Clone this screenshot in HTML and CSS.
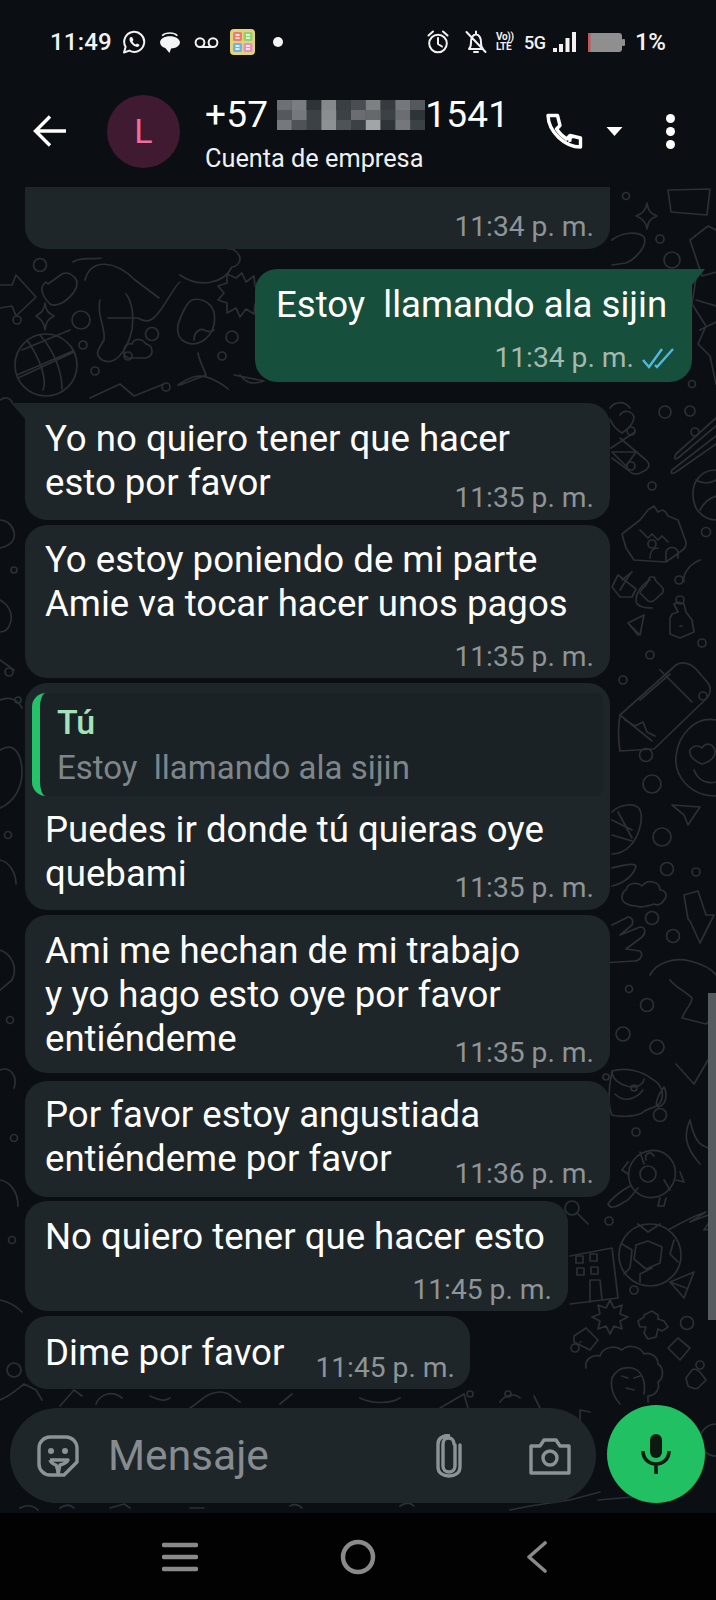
FILE: index.html
```html
<!DOCTYPE html>
<html lang="es">
<head>
<meta charset="utf-8">
<title>WhatsApp</title>
<link rel="stylesheet" href="styles.css">
</head>
<body>
<div class="app">
  <div class="status">
    <span class="clock">11:49</span>
    <svg class="si si-wa" viewBox="0 0 24 24"><path class="w2" d="M2 22.5l1.6-5.6A10 10 0 1 1 7.4 20.6z"/><path class="wf" d="M9 7c-.6 0-1.500.9-1.500 2.300 0 3 3.700 7.200 7.500 7.600 1.500 0 2.500-1.100 2.500-2.100l-2.500-1.400-1.100 1.100c-1.600-.6-2.800-1.800-3.400-3.300l1-1.100L10.200 7.300z"/></svg>
    <svg class="si si-msg" viewBox="0 0 21 20"><path class="wf" d="M10.500 4C5 4 1 6.500 1 10c0 2.500 2.200 4.500 5 5.200L10 20l1.500-4.200c4.500-.3 8.500-2.500 8.500-5.800 0-3.500-4.500-6-9.500-6z"/><path class="w15" d="M3 3.500C5 1.500 8 1 10.500 1s5 .5 7 2.500"/></svg>
    <svg class="si si-vm" viewBox="0 0 25 11"><path class="w2" d="M6 10h13M6 1.200a4.400 4.400 0 1 0 0 8.800 4.400 4.400 0 0 0 0-8.800zM19 1.200a4.400 4.400 0 1 0 0 8.800 4.400 4.400 0 0 0 0-8.800z"/></svg>
    <svg class="si si-app" viewBox="0 0 25 26"><rect width="25" height="26" rx="4" fill="#e3d479"/><rect x="3" y="3" width="9" height="9" rx="1.500" fill="#ea7d6e"/><rect x="13.500" y="3" width="9" height="9" rx="1.500" fill="#93d06f"/><rect x="3" y="14" width="9" height="9" rx="1.500" fill="#6db2e8"/><rect x="13.500" y="14" width="9" height="9" rx="1.500" fill="#e590c8"/><path d="M5.500 6h4M5.500 9h4M16 6h4M16 9h4M5.500 17h4M5.500 20h4M16 17h4M16 20h4" stroke="#fff" stroke-width="1.300"/></svg>
    <span class="sdot"></span>
    <span class="grow"></span>
    <svg class="si si-alarm" viewBox="0 0 22 24"><circle class="w2" cx="11" cy="13.500" r="8.800"/><path class="w2" d="M11 8v6l4 2.500M1.500 5.500L6 1.500M20.500 5.500L16 1.500"/></svg>
    <svg class="si si-bell" viewBox="0 0 22 24"><path class="w2" d="M4 19c1.500-1.500 2-3 2-6.500C6 8 7.500 5 11 4.300 14.500 5 16 8 16 12.500c0 3 .5 5 2 6.500zM9 22h4M11 1.500v2.500M1.500 2l19 20"/></svg>
    <div class="volte"><span>Vo))</span><span>LTE</span></div>
    <span class="fiveg">5G</span>
    <svg class="si si-sig" viewBox="0 0 23 21"><rect x="0" y="16" width="4" height="4"/><rect x="6" y="12" width="4" height="8"/><rect x="12.500" y="6" width="4" height="14"/><rect x="19" y="0" width="4" height="20"/></svg>
    <svg class="si si-bat" viewBox="0 0 37 19"><rect width="34" height="19" rx="3" fill="#8f8f8f"/><rect width="2.500" height="19" fill="#c0565a"/><rect x="34" y="6" width="3" height="7" rx="1" fill="#8f8f8f"/></svg>
    <span class="pct">1%</span>
  </div>

  <header class="bar">
    <svg class="back" viewBox="0 0 34 32"><path d="M33 16H3M17 1.500L2.500 16 17 30.500"/></svg>
    <div class="avatar">L</div>
    <div class="who">
      <div class="name">+57
        <svg class="blur" viewBox="0 0 10 3" preserveAspectRatio="none"><rect width="10" height="3" fill="#3c4145"/><rect x="0" width="1" height="1" fill="#6d7175"/><rect x="1" width="1" height="1" fill="#7a7e82"/><rect x="2" width="1" height="1" fill="#2e3337"/><rect x="3" width="1" height="1" fill="#85898c"/><rect x="4" width="1" height="1" fill="#3a3f43"/><rect x="5" width="1" height="1" fill="#494e52"/><rect x="6" width="1" height="1" fill="#7d8184"/><rect x="7" width="1" height="1" fill="#363b3f"/><rect x="8" width="1" height="1" fill="#74787c"/><rect x="9" width="1" height="1" fill="#55595d"/><rect x="0" y="1" width="1" height="1" fill="#55595d"/><rect x="1" y="1" width="1" height="1" fill="#75797d"/><rect x="3" y="1" width="1" height="1" fill="#8a8e91"/><rect x="5" y="1" width="1" height="1" fill="#6a6e72"/><rect x="6" y="1" width="1" height="1" fill="#65696d"/><rect x="8" y="1" width="1" height="1" fill="#6a6e72"/><rect x="9" y="1" width="1" height="1" fill="#2f3438"/><rect x="0" y="2" width="1" height="1" fill="#75797d"/><rect x="1" y="2" width="1" height="1" fill="#4e5357"/><rect x="3" y="2" width="1" height="1" fill="#8d9194"/><rect x="4" y="2" width="1" height="1" fill="#4e5357"/><rect x="6" y="2" width="1" height="1" fill="#a1a5a8"/><rect x="7" y="2" width="1" height="1" fill="#2f3438"/><rect x="8" y="2" width="1" height="1" fill="#74787c"/></svg>1541
      </div>
      <div class="sub">Cuenta de empresa</div>
    </div>
    <svg class="phone" viewBox="0 0 38 36"><path d="M3 2.500h9.500l2.500 10-3.500 3.500c3 4.500 5.500 7 10 10l3.500-3.500 10.500 2.500V34C20 34 3.500 19 3 2.500zM5 2.500 M25 29a5 5 0 0 1 3-6"/></svg>
    <svg class="caret" viewBox="0 0 17 10"><path d="M0.500 1h16L8.500 10z"/></svg>
    <div class="dots"><i></i><i></i><i></i></div>
  </header>

  <main class="chat">
    <svg class="doodles" viewBox="0 187 716 1326">
      <!-- top right -->
      <circle cx="626" cy="196" r="3.500"/><path d="M647 203c1 8 4 11 10 13-6 2-9 5-10 13-1-8-5-11-11-13 6-2 10-5 11-13z"/>
      <circle cx="660" cy="239" r="4"/><circle cx="672" cy="260" r="8"/>
      <path d="M668 190l3 22 36 3 3-26zM690 240l18-14 20 10-4 34-22 6z"/>
      <path d="M612 240c10-8 26-9 32-3 4 8-8 22-18 26l-14 2"/>
      <path d="M696 278l-4 26 14 22-8 18 12 12 6 28M696 300l20 6M700 330l16-8"/>
      <circle cx="692" cy="384" r="3.500"/>
      <!-- top left band -->
      <circle cx="40" cy="265" r="6.500"/><circle cx="17" cy="320" r="4"/><circle cx="81" cy="320" r="9"/><circle cx="83" cy="345" r="4"/><circle cx="95" cy="371" r="4"/><circle cx="128" cy="356" r="4"/><circle cx="152" cy="334" r="6.500"/><circle cx="232" cy="337" r="6"/><circle cx="222" cy="356" r="4"/><circle cx="166" cy="387" r="4"/>
      <path d="M45 303c1 8 3 10 9 13-6 3-8 6-9 14-1-8-4-11-9-14 5-3 8-5 9-13z"/>
      <path d="M0 285h12l4-10 20 22-20 19-4-10-12 2"/>
      <circle cx="46" cy="365" r="31"/><path d="M18 378l56-26M22 350l48-20M27 340c14 20 20 40 16 50M40 335c14 16 22 36 22 54M17 375l56-24"/>
      <path d="M46 282c-6 4-6 12 4 22 8 4 18-4 24-12 4-6 4-12 0-15-6-6-10-4-12-3l-14 10z"/>
      <path d="M73 262c8-6 20-2 28-4M85 280c6-22 30-20 50 0l24 18M100 300c-4 14 6 28 4 40-6 10-10 14-2 20 12 6 24-6 30-30 2-16 0-28-6-36M108 318h30c12 8 18-2 24-10 8-12 16-26 18-26"/>
      <path d="M180 275c20 14 44 8 52-8 4 0 8-4 8-8s-6-12-12-10"/>
      <path d="M184 310c-6 12-10 22-2 30 8 6 16 4 22 0 8-6 12-16 10-28-4-12-16-14-22-12-4 2-6 6-8 10zM194 340c0-8 6-12 10-10 4 2 8 2 10 0"/>
      <path d="M226 293l4 9 8-6 1 10 10 2-7 7 7 7-10 2-1 10-8-5-6 8-4-9-9 5v-10l-9-3 6-7-6-7 9-3v-9l9 4z" transform="translate(16 -20)"/>
      <path d="M178 385c14-10 24-12 38-4 6 3 10 6 12 8M198 353c2 10 6 16 8 22l-26 10M240 375c6 8 12 10 24 6l-30-6M90 398l30-14 14 12 30-12"/>
      <path d="M146 344c-4-6-12-6-14 0-8-2-12 10-4 14h18c8-2 8-12 0-14z"/>
      <path d="M0 400c6-4 10-2 12 2"/>
      <!-- right column upper -->
      <path d="M630 408c-6-8-16-6-20 0M620 415c4-6 12-4 14 2 0 6-6 12-12 16-4-2-10-8-12-14M620 438l26 22c4 4 4 6 0 10l-8 4c-4 0-6 0-10-4l-16-12"/>
      <circle cx="665" cy="412" r="6"/><circle cx="690" cy="411" r="5"/><circle cx="695" cy="432" r="4"/><circle cx="631" cy="431" r="4"/><circle cx="652" cy="486" r="4"/><circle cx="706" cy="532" r="4.500"/><circle cx="631" cy="466" r="4"/>
      <path d="M636 452h-24l14 14 10-14zM611 448l24-16"/>
      <path d="M716 418l-40 36c-2 4-2 6 2 4l38-32M716 436l-44 34c-2 4 0 4 4 2l40-28"/>
      <path d="M716 470c-18 0-26 16-22 32 2 12 14 18 22 18M696 480c6 4 14 4 20 0M700 510c4-8 10-12 16-14"/>
      <path d="M640 520l-18 14 4 14 8 12 32 2 14-10c6-4 6-6 6-10l-8-22-10-4c-4-8-6-6-10-4l-4-6-6 4zM640 530l8 8 4-4 6 6 4-4 6 6M650 558c0-8 4-10 8-10M666 562v-10c2-6 10-6 12 0v6"/>
      <circle cx="652" cy="544" r="4"/>
      <path d="M618 575l18 14-4 8h-12l-8-10zM632 572l-10 8"/>
      <path d="M620 590l10-16"/>
      <path d="M650 580c-10 6-14 14-14 20 0 6 8 8 16 8M700 560c-10 4-18 14-16 22"/>
      <!-- right column middle -->
      <path d="M646 585c-4 4-6 6-6 8l8 8c4 2 6 0 12-6 4-2 4-6 2-8l-6-6-2-4h-4l-2 4zM670 618l2-4 6-2-4-8 4-2 6 2 2 8 6 8 2 12-14 6-10-4zM680 626h2"/>
      <path d="M628 623l16-8-4 20zM628 623l10 12"/>
      <circle cx="679" cy="580" r="4"/><circle cx="702" cy="643" r="4"/><circle cx="650" cy="655" r="4"/><circle cx="623" cy="680" r="4"/><circle cx="703" cy="696" r="4"/><circle cx="680" cy="600" r="4"/><circle cx="646" cy="755" r="6.500"/><circle cx="652" cy="784" r="9"/><circle cx="662" cy="837" r="9"/><circle cx="667" cy="869" r="6.500"/><circle cx="696" cy="872" r="4"/><circle cx="652" cy="918" r="6.500"/><circle cx="673" cy="936" r="6.500"/>
      <path d="M620 715l56-50c6-4 14-2 20 4l12 14c4 6 2 12-2 16l-52 50-34 2c-2-12-2-24 0-36zM620 715l32 26M660 670l32 32M625 720l10 6 8-4 4 10 8 4M640 700l30-26"/>
      <path d="M716 720c-22-4-38 16-40 36-2 20 14 40 40 40M690 750c4-6 10-4 12-2 4-6 10-4 12 0 4 8-4 14-12 16-6-2-14-8-12-14zM694 770c4 10 12 14 22 12"/>
      <path d="M672 805l28 2-12 18-4-10z"/>
      <path d="M612 812c8-8 24-10 28-2 4 10-2 28-10 36-6 6-12 8-18 8M612 820l20 10M612 835l20 6M618 812l14 26"/>
      <path d="M612 868c8-2 22-6 24-2-2 10-14 18-24 20"/>
      <path d="M626 888c2-8 12-8 16-4 6-8 18-4 18 4 6 0 8 6 4 10-2 4-6 6-10 4-6 2-14 4-18 2-8 0-14-4-14-8s2-8 4-8z" transform="translate(0 2)"/>
      <path d="M684 895l14-4 8 24 8 0-14 28-10-22-2-2z"/>
      <path d="M612 925l16-8c4 0 6 4 4 8l-12 10 20-8c6 0 6 6 2 10l-16 12 14 2c4 4 0 10-6 10l-32 2"/>
      <path d="M650 975c6-12 24-18 40-14 8 2 20 6 26 14"/>
      <circle cx="629" cy="989" r="3.500"/><circle cx="647" cy="1005" r="6.500"/><circle cx="623" cy="1034" r="7"/><circle cx="657" cy="1047" r="7"/><circle cx="660" cy="1115" r="6.500"/><circle cx="636" cy="1132" r="4"/><circle cx="609" cy="1221" r="4"/><circle cx="634" cy="1290" r="4"/><circle cx="687" cy="1323" r="6.500"/><circle cx="700" cy="1365" r="4"/><circle cx="575" cy="1348" r="4"/>
      <path d="M670 980c6 8 14 10 22 18 0 6-6 10-10 20l24 6 10-8M676 1064l18 20 14-24"/>
      <path d="M612 1071c14-4 30 0 40 8 8 4 14 14 8 24-4 6-12 4-18 10-8 4-24 4-30 2-4-8-4-26 0-44zM615 1094c10 10 22 4 28-4M664 1087c-6 8-10 18-6 20 8-2 10-12 6-20zM612 1071c0 16 30 22 32 8"/>
      <circle cx="606" cy="1077" r="3"/><circle cx="634" cy="1088" r="3"/>
      <path d="M690 1120c-6 14-6 26 10 44M716 1150c-10-4-20 0-26-30"/>
      <ellipse cx="652" cy="1174" rx="23" ry="24" transform="rotate(40 652 1174)"/><circle cx="648" cy="1174" r="8"/><path d="M646 1160c-2-6 4-10 8-4M628 1162l-6 8 6 4M630 1186c-8 4-18 12-22 18 2 6 10 2 16-2 6-2 10-10 14-14M660 1198l-2 8h6l2-8M676 1180l8 2-4-10M640 1152l4 12M670 1190l-6-10"/>
      <circle cx="650" cy="1255" r="31"/><path d="M648 1241l14 6-2 16-14 6-12-10 2-14zM638 1224l10 8 12-8M622 1244l10 6-2 18-6 6M674 1240l-4 14 8 8M640 1282v-8l12-6"/>
      <path d="M668 1230c12-6 24-14 38-18l-16 10 26-10-12 18 12-2"/>
      <path d="M670 1282l24-10-10 26zM670 1282l16 6"/>
      <path d="M570 1256l42-8 6 50-48 6M590 1302v-22h10l2 20"/>
      <rect x="576" y="1256" width="7" height="7"/><rect x="590" y="1254" width="7" height="7"/><rect x="577" y="1268" width="7" height="7"/><rect x="591" y="1267" width="7" height="7"/>
      <circle cx="572" cy="1208" r="7"/><path d="M578 1214l10 10"/>
      <path d="M610 1300l4 8 8-3-2 9 8 3-8 4 2 8-8-3-4 8-4-8-8 3 2-8-8-4 8-3-2-9 8 3z"/>
      <path d="M644 1315l8-4 6 4v4l6 2 4 6-6 4-4-2-2 8-8 2-4-6 2-6-6 0-2-6 6-4z"/>
      <path d="M668 1348l10-10 12 10-10 12zM686 1378l6-8c2-2 6 0 8 2l6 8-8 8c-4 2-6 0-10-2z"/>
      <path d="M574 1336l12-8 12 12-8 10-16-8zM580 1342h1"/>
      <path d="M586 1368c-2-8 6-14 14-12 2-8 14-12 22-6 6-6 18-4 22 4 6-2 14 2 14 10 6 4 6 14 0 18 2 6-2 14-10 14v6M620 1404c-6-6-10-16-8-26 4-8 10-12 20-10 10 2 14 14 12 26M622 1376l6 2M634 1378l6-2M626 1388l8 2"/>
      <path d="M580 1420l0-10 10 2"/>
      <!-- left column -->
      <path d="M0 520c6 0 12 4 14 12s-4 14-14 16M0 600c8 4 14 14 10 24-2 6-6 8-10 8M0 660l14 10M0 700c10-4 18 0 22 8M0 750c16-10 22 8 22 22 0 16-8 30-22 36M0 860c10 2 16 14 16 24M0 950c12 4 18 18 12 30l-12 10M0 1070c10-4 18 6 14 18M0 1180c12 2 18 14 18 26M0 1300c10 2 18 8 22 12"/>
      <circle cx="9" cy="672" r="4"/><circle cx="14" cy="570" r="3"/><circle cx="18" cy="700" r="3"/><circle cx="8" cy="835" r="3.500"/><circle cx="10" cy="1020" r="3.500"/><circle cx="14" cy="1138" r="3.500"/><circle cx="12" cy="1240" r="3.500"/>
      <!-- bottom band -->
      <circle cx="14" cy="1370" r="7"/><path d="M0 1400c10-4 14-8 24-16l12 6 6 10M60 1406l14-16 8 6M96 1404c4-10 16-14 26-6M150 1396c10 4 14 6 20 2M190 1408c12-8 18-16 30-16 10 0 12 6 20 10M280 1404l12-10M360 1398c12 6 30 6 40 0M440 1408l24-14 4 14M500 1402c4-6 14-10 20-4M540 1408l-6-12"/>
      <circle cx="508" cy="1394" r="3"/><circle cx="470" cy="1394" r="3"/>
      <path d="M20 1508c8-4 14-2 18 2M60 1508c6-4 10-4 14 0M110 1508l14-4 6 4M190 1508h14M290 1506c4-2 8-2 12 2M400 1506c6-4 10-4 14 0M510 1510l20-4 40-6 30-8M598 1500l46-4"/>
      <circle cx="716" cy="1440" r="16"/>
    </svg>

    <div class="msgs">
      <div class="bub first"><span class="t t-first">11:34 p. m.</span></div>

      <div class="bub out">
        <p class="tx">Estoy &nbsp;llamando ala sijin</p>
        <div class="t-row"><span class="t t-out">11:34 p. m.</span>
          <svg class="ticks" viewBox="0 0 32 21"><path d="M1 12l6 7L20 1M13 17l2 2L31 1"/></svg>
        </div>
      </div>

      <div class="bub in tail m2">
        <p class="tx">Yo no quiero tener que hacer<br>esto por favor</p>
        <span class="t t-in over">11:35 p. m.</span>
      </div>

      <div class="bub in m3">
        <p class="tx">Yo estoy poniendo de mi parte<br>Amie va tocar hacer unos pagos</p>
        <span class="t t-in below">11:35 p. m.</span>
      </div>

      <div class="bub in m4">
        <div class="reply">
          <div class="rname">Tú</div>
          <div class="rtext">Estoy &nbsp;llamando ala sijin</div>
        </div>
        <p class="tx">Puedes ir donde tú quieras oye<br>quebami</p>
        <span class="t t-in over">11:35 p. m.</span>
      </div>

      <div class="bub in m5">
        <p class="tx">Ami me hechan de mi trabajo<br>y yo hago esto oye por favor<br>entiéndeme</p>
        <span class="t t-in over">11:35 p. m.</span>
      </div>

      <div class="bub in m6">
        <p class="tx">Por favor estoy angustiada<br>entiéndeme por favor</p>
        <span class="t t-in over">11:36 p. m.</span>
      </div>

      <div class="bub in m7">
        <p class="tx">No quiero tener que hacer esto</p>
        <span class="t t-in below7">11:45 p. m.</span>
      </div>

      <div class="bub in m8">
        <p class="tx nowrap">Dime por favor</p>
        <span class="t t-in side">11:45 p. m.</span>
      </div>
    </div>

    <div class="scroll"></div>

    <div class="composer">
      <div class="input">
        <svg class="emoji" viewBox="0 0 42 42"><path d="M13 2h16c6 0 11 5 11 11v14L27 40H13C7 40 2 35 2 29V13C2 7 7 2 13 2z"/><path d="M13 25h18c-1 3-4 4-8 5-1 3-1 6-2 9M21 39c0-4-1-7-2-9-3-1-5-2-6-5"/><circle class="fill" cx="14" cy="16" r="3"/><circle class="fill" cx="28" cy="16" r="3"/></svg>
        <span class="ph">Mensaje</span>
        <span class="grow"></span>
        <svg class="clip" viewBox="0 0 28 44"><path d="M20 11v21c0 4-3 6-6 6s-6-2-6-6V10c0-3 2-6 5.500-6S19 7 19 10M25 11v22c0 6-5 9-11 9S3 39 3 33V10C3 5 7 1.500 13.500 1.500"/></svg>
        <svg class="cam" viewBox="0 0 42 38"><path d="M2 9h9l4-6h12l4 6h9v27H2z"/><circle cx="21" cy="21" r="7"/></svg>
      </div>
      <button class="mic" type="button" aria-label="Micrófono">
        <svg viewBox="0 0 30 40"><rect x="9" y="0" width="12" height="24" rx="6" fill="#0c1a12"/><path d="M2 17c0 8 6 13 13 13s13-5 13-13M15 30v10" fill="none" stroke="#0c1a12" stroke-width="3.600"/></svg>
      </button>
    </div>
  </main>

  <nav class="nav">
    <svg class="n-menu" viewBox="0 0 36 30"><path d="M2 3h32M2 15h32M2 27h32"/></svg>
    <svg class="n-home" viewBox="0 0 36 36"><circle cx="18" cy="18" r="15"/></svg>
    <svg class="n-back" viewBox="0 0 22 32"><path d="M19 2L3 16l16 14"/></svg>
  </nav>
</div>
</body>
</html>
```

FILE: styles.css
```css
* { box-sizing: border-box; }
html, body { margin: 0; padding: 0; background: #0b0f13; }
body { font-family: Roboto, "Liberation Sans", sans-serif; overflow: hidden; }
.app { width: 716px; height: 1600px; display: flex; flex-direction: column; overflow: hidden; color: #fff; }
.grow { flex: 1; }

/* status bar */
.status { height: 82px; flex: none; display: flex; align-items: center; padding: 2px 51px 0 50px; background: #0b0f13; }
.clock { font-size: 24px; font-weight: 500; width: 72px; color: #f2f2f2; letter-spacing: .2px; }
.si { flex: none; display: block; }
.w2 { fill: none; stroke: #f2f2f2; stroke-width: 2; stroke-linejoin: round; stroke-linecap: round; }
.w15 { fill: none; stroke: #f2f2f2; stroke-width: 1.5; }
.wf { fill: #f5f5f5; }
.si-wa { width: 24px; height: 24px; margin-right: 13px; }
.si-msg { width: 22px; height: 21px; margin-right: 13px; }
.si-vm { width: 25px; height: 11px; margin-right: 11px; }
.si-app { width: 25px; height: 26px; }
.sdot { width: 10px; height: 10px; border-radius: 50%; background: #f5f5f5; margin-left: 18px; }
.si-alarm { width: 22px; height: 24px; margin-right: 16px; }
.si-bell { width: 22px; height: 24px; margin-right: 9px; }
.volte { width: 21px; display: flex; flex-direction: column; font-size: 10px; font-weight: 700; line-height: 10px; margin-right: 7px; color: #f2f2f2; letter-spacing: -.3px; }
.fiveg { width: 22px; font-size: 18px; font-weight: 500; margin-right: 7px; color: #f2f2f2; letter-spacing: -.6px; white-space: nowrap; }
.si-sig { width: 23px; height: 21px; margin-right: 12px; fill: #f2f2f2; }
.si-bat { width: 37px; height: 19px; margin-right: 10px; }
.pct { font-size: 24px; font-weight: 500; width: 30px; color: #f2f2f2; white-space: nowrap; letter-spacing: -.3px; }

/* header */
.bar { height: 105px; flex: none; display: flex; align-items: center; background: #0b0f13; padding: 0 0 9px 33px; }
.back { width: 34px; height: 32px; margin-right: 40px; margin-top: 1px; fill: none; stroke: #fff; stroke-width: 3.4; }
.avatar { width: 73px; height: 73px; border-radius: 50%; background: #3f1a30; color: #ef6e9d; font-size: 34px; display: flex; align-items: center; justify-content: center; margin: 2px 25px 0 0; }
.who { width: 340px; padding-top: 9px; }
.name { font-size: 37px; line-height: 40px; display: flex; align-items: center; gap: 9px; letter-spacing: .2px; }
.blur { width: 148px; height: 30px; margin-right: -9px; }
.sub { font-size: 25.300px; line-height: 30px; margin-top: 9px; color: #f0f0f0; }
.phone { width: 38px; height: 36px; margin-top: 2px; fill: none; stroke: #fff; stroke-width: 3.4; stroke-linejoin: round; }
.caret { width: 17px; height: 10px; margin: 2px 0 0 23px; fill: #fff; }
.dots { display: flex; flex-direction: column; gap: 4px; margin: 3px 0 0 43px; }
.dots i { display: block; width: 9px; height: 9px; border-radius: 50%; background: #fff; }

/* chat */
.chat { position: relative; flex: 1; display: flex; flex-direction: column; background: #0b0f13; overflow: hidden; }
.doodles { position: absolute; left: 0; top: 0; width: 716px; height: 1326px; fill: none; stroke: #2b3034; stroke-width: 1.700; stroke-linecap: round; stroke-linejoin: round; }
.msgs { position: relative; flex: 1; display: flex; flex-direction: column; align-items: flex-start; }
.bub { position: relative; background: #1f2629; border-radius: 22px; }
.tx { margin: 0; font-size: 36.600px; line-height: 44px; color: #fff; }
.nowrap { white-space: nowrap; }
.t { font-size: 28.200px; line-height: 34px; color: #8e9497; display: block; white-space: nowrap; }
.t-in { text-align: right; }
.first { margin-left: 25px; width: 585px; height: 62px; border-radius: 0 0 22px 22px; padding: 23px 16px 0 0; }
.t-first { text-align: right; }

.out { align-self: flex-start; margin: 20px 0 0 255px; width: 437px; height: 113px; background: #164f3b; border-radius: 22px 0 22px 22px; padding: 14px 18px 0 21px; }
.out::after { content: ""; position: absolute; top: 0; left: 100%; width: 13px; height: 16px; background: #164f3b; clip-path: polygon(0 0, 100% 0, 0 100%); }
.t-row { display: flex; align-items: center; justify-content: flex-end; gap: 8px; margin-top: 14px; }
.t-out { color: #a5b9ae; }
.ticks { width: 32px; height: 21px; fill: none; stroke: #52b8de; stroke-width: 2.400; }

.in { margin-left: 25px; width: 585px; padding: 14px 16px 0 20px; }
.tail { border-top-left-radius: 0; }
.tail::before { content: ""; position: absolute; top: 0; right: 100%; width: 14px; height: 16px; background: #1f2629; clip-path: polygon(0 0, 100% 0, 100% 100%); }
.over { margin-top: -24px; }
.below { margin-top: 14px; }
.below7 { margin-top: 14px; }
.m2 { margin-top: 21px; height: 117px; }
.m3 { margin-top: 5px; height: 153px; padding-top: 13px; }
.m4 { margin-top: 5px; height: 227px; padding: 10px 16px 0 7px; }
.m4 .tx { margin: 12px 0 0 13px; }
.m4 .over { margin-top: -25px; }
.m5 { margin-top: 5px; height: 158px; }
.m5 .over { margin-top: -25px; }
.m6 { margin-top: 8px; height: 116px; padding-top: 12px; }
.m7 { margin-top: 4px; width: 543px; height: 110px; }
.m8 { margin-top: 5px; width: 445px; height: 73px; display: flex; justify-content: space-between; padding: 15px 15px 0 20px; }
.side { margin-top: 20px; }

.reply { height: 103px; margin-right: -9px; background: #1b2226; border-left: 8px solid #25c26c; border-radius: 14px 8px 8px 14px; padding: 11px 0 0 17px; }
.rname { font-size: 34px; line-height: 36px; font-weight: 500; color: #a4e2ba; }
.rtext { font-size: 33px; line-height: 38px; margin-top: 9px; color: #7f868b; white-space: nowrap; }

.scroll { position: absolute; right: 0; top: 806px; width: 8px; height: 327px; background: #555b5e; }

.composer { position: relative; flex: none; display: flex; align-items: flex-end; padding: 0 11px 10px 10px; gap: 11px; }
.input { flex: 1; height: 95px; display: flex; align-items: center; background: #1f2629; border-radius: 48px; padding: 0 25px 0 27px; color: #868c90; }
.emoji { width: 42px; height: 42px; margin-right: 29px; fill: none; stroke: #8c9295; stroke-width: 3.400; stroke-linejoin: round; }
.emoji .fill { fill: #8c9295; stroke: none; }
.ph { font-size: 42.500px; line-height: 44px; color: #868c90; }
.clip { width: 28px; height: 44px; margin-right: 66px; fill: none; stroke: #8c9295; stroke-width: 3.400; stroke-linecap: round; }
.cam { width: 42px; height: 38px; fill: none; stroke: #8c9295; stroke-width: 3.400; stroke-linejoin: round; }
.mic { width: 98px; height: 98px; border: 0; padding: 0; border-radius: 50%; background: #21c063; display: flex; align-items: center; justify-content: center; flex: none; }
.mic svg { width: 30px; height: 40px; display: block; }

/* nav */
.nav { height: 87px; flex: none; background: #020202; display: flex; align-items: center; padding: 0 0 0 162px; }
.n-menu { width: 36px; height: 30px; margin-right: 142px; fill: none; stroke: #8a8a8a; stroke-width: 4.500; stroke-linecap: round; }
.n-home { width: 36px; height: 36px; margin-right: 150px; fill: none; stroke: #8a8a8a; stroke-width: 4.500; }
.n-back { width: 22px; height: 32px; fill: none; stroke: #8a8a8a; stroke-width: 3.600; stroke-linecap: round; stroke-linejoin: round; }
```
